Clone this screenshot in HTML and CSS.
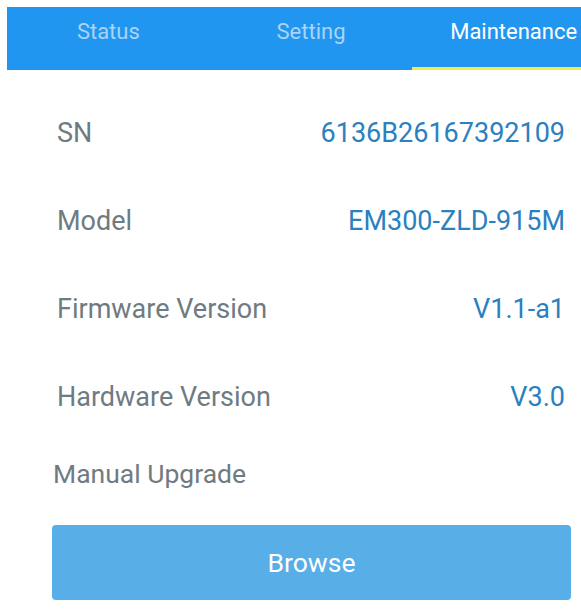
FILE: index.html
```html
<!DOCTYPE html>
<html>
<head>
<meta charset="utf-8">
<link rel="stylesheet" href="styles.css">
</head>
<body>
<div class="page">
  <div class="tabbar">
    <nav class="tabs">
      <div class="tab">Status</div>
      <div class="tab">Setting</div>
      <div class="tab active">Maintenance</div>
    </nav>
  </div>
  <div class="rows">
    <div class="row"><span class="label">SN</span><span class="value">6136B26167392109</span></div>
    <div class="row"><span class="label">Model</span><span class="value">EM300-ZLD-915M</span></div>
    <div class="row"><span class="label">Firmware Version</span><span class="value">V1.1-a1</span></div>
    <div class="row"><span class="label">Hardware Version</span><span class="value">V3.0</span></div>
  </div>
  <div class="upgrade">Manual Upgrade</div>
  <button class="browse">Browse</button>
</div>
</body>
</html>
```
FILE: styles.css
```css
html, body {
  margin: 0;
  padding: 0;
  background: #fff;
  overflow: hidden;
}
body {
  font-family: Roboto, "Liberation Sans", sans-serif;
  width: 581px;
  height: 611px;
}
.page {
  padding: 7px 0 0 7px;
}
.tabbar {
  width: 574px;
  overflow: hidden;
}
.tabs {
  display: flex;
  width: 608px;
  height: 63px;
  background: #2196f1;
}
.tab {
  flex: 1;
  text-align: center;
  font-size: 22px;
  line-height: 50px;
  color: #a9d4f6;
  box-sizing: border-box;
}
.tab.active {
  color: #fff;
  border-bottom: 3px solid #f5e84a;
}
.rows {
  margin-top: 19px;
  padding: 0 16px 0 50px;
  width: 574px;
  box-sizing: border-box;
}
.row {
  display: flex;
  justify-content: space-between;
  align-items: center;
  height: 88px;
  font-size: 27px;
}
.label {
  color: #6f7b82;
}
.value {
  color: #2b80bf;
}
.upgrade {
  margin: 18px 0 0 46px;
  height: 30px;
  line-height: 30px;
  font-size: 26.5px;
  color: #6f7b82;
}
.browse {
  display: block;
  margin: 36px 0 0 45px;
  width: 519px;
  height: 75px;
  border: none;
  border-radius: 4px;
  background: #58aee6;
  color: #fff;
  font-family: Roboto, "Liberation Sans", sans-serif;
  font-size: 26.5px;
  padding: 0;
}
```
